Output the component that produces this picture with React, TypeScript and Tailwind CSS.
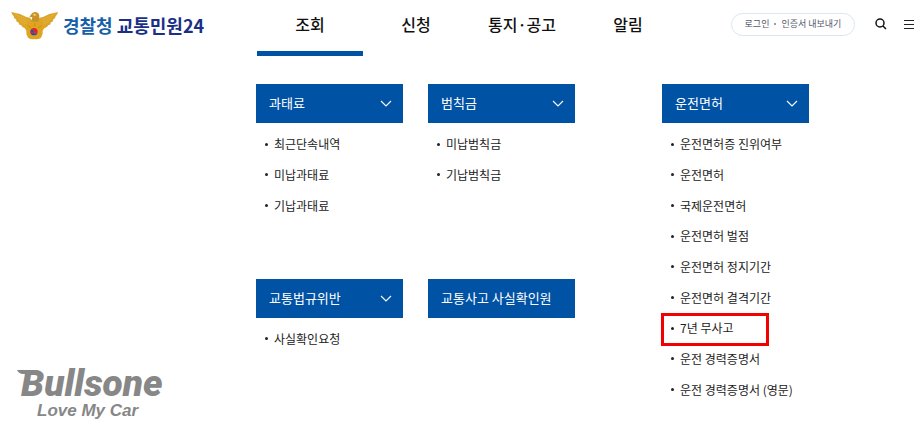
import { clsx } from 'clsx'

interface MenuItem {
  label: string
  highlighted?: boolean
}

interface MenuSection {
  title: string
  expandable: boolean
  items: MenuItem[]
  className?: string
  listClassName?: string
}

const navItems = ['조회', '신청', '통지·공고', '알림']

const sections: MenuSection[] = [
  {
    title: '과태료',
    expandable: true,
    items: [{ label: '최근단속내역' }, { label: '미납과태료' }, { label: '기납과태료' }],
    className: 'col-start-1 row-start-1',
    listClassName: 'min-h-[92px]',
  },
  {
    title: '범칙금',
    expandable: true,
    items: [{ label: '미납범칙금' }, { label: '기납범칙금' }],
    className: 'col-start-2 row-start-1',
    listClassName: 'min-h-[61px]',
  },
  {
    title: '운전면허',
    expandable: true,
    items: [
      { label: '운전면허증 진위여부' },
      { label: '운전면허' },
      { label: '국제운전면허' },
      { label: '운전면허 벌점' },
      { label: '운전면허 정지기간' },
      { label: '운전면허 결격기간' },
      { label: '7년 무사고', highlighted: true },
      { label: '운전 경력증명서' },
      { label: '운전 경력증명서 (영문)' },
    ],
    className: 'col-start-4 row-start-1 row-span-2',
    listClassName: 'min-h-[276px]',
  },
  {
    title: '교통법규위반',
    expandable: true,
    items: [{ label: '사실확인요청' }],
    className: 'col-start-1 row-start-2',
    listClassName: 'min-h-[29px]',
  },
  {
    title: '교통사고 사실확인원',
    expandable: false,
    items: [],
    className: 'col-start-2 row-start-2',
  },
]

function PoliceEmblem() {
  return (
    <svg viewBox="18 12 141 87" className="h-[29px] w-[47px] shrink-0" aria-hidden="true">
      {/* wings */}
      <path
        d="M19 15 L45 21 L64 30 L75 32 L80 40 L98 40 L103 32 L114 30 L133 21 L159 15 L156 23 L152 27 L150 34 L145 37 L143 44 L138 46 L135 53 L130 54 L126 60 L112 66 L66 66 L52 60 L48 54 L43 53 L40 46 L35 44 L33 37 L28 34 L26 27 L22 23 Z"
        fill="#dda62a"
      />
      <path
        d="M30 23 L66 38 M38 33 L66 45 M46 43 L66 52 M148 23 L112 38 M140 33 L112 45 M132 43 L112 52"
        stroke="#e3b03a"
        strokeWidth="3"
        fill="none"
      />
      {/* head */}
      <path d="M77 24 Q82 14 92 15 Q102 17 103 27 L101 44 L78 44 L82 30 L73 31 Z" fill="#c8922a" />
      <path d="M83 21 L91 20 L95 25 L87 27 Z" fill="#efca62" />
      {/* rose of sharon body */}
      <path
        d="M58 56 Q66 45 78 49 Q89 42 100 49 Q112 45 119 56 Q120 64 113 71 Q115 82 108 92 Q98 99 89 96 Q79 99 69 92 Q62 82 64 71 Q57 64 58 56 Z"
        fill="#dfa51f"
      />
      <path d="M68 56 L79 63 M109 56 L99 63 M89 49 L89 58" stroke="#bb8420" strokeWidth="2" />
      {/* taegeuk */}
      <path d="M76 74 A11 11 0 0 1 98 74 A5.5 5.5 0 0 1 87 74 A5.5 5.5 0 0 0 76 74" fill="#e0252f" />
      <path d="M76 74 A5.5 5.5 0 0 1 87 74 A5.5 5.5 0 0 0 98 74 A11 11 0 0 1 76 74" fill="#1c52a8" transform="rotate(0 87 74)" />
      <path d="M76 74 A5.5 5.5 0 0 0 87 74 Z" fill="#e0252f" />
    </svg>
  )
}

function Header() {
  return (
    <header className="flex items-start">
      <a href="#" className="flex h-[50px] w-[257px] shrink-0 items-center gap-[5px] pl-[11px]">
        <PoliceEmblem />
        <span className="flex gap-1 text-[18px] leading-6 font-bold whitespace-nowrap">
          <span className="text-[#1560a8]">경찰청</span>
          <span className="text-[#1b2f86]">교통민원24</span>
        </span>
      </a>

      <nav className="flex">
        {navItems.map((item, i) => (
          <a
            key={item}
            href="#"
            className={clsx(
              'flex h-14 w-[106px] items-center justify-center border-b-5 pb-1 text-base font-medium text-[#111]',
              i === 0 ? 'border-[#0052a5]' : 'border-transparent'
            )}
          >
            {item}
          </a>
        ))}
      </nav>

      <div className="ml-auto flex h-12 shrink-0 items-center pr-2">
        <div className="flex h-[23px] w-[124px] items-center justify-center rounded-full border border-[#dde4f2] text-[9px] whitespace-nowrap text-[#555b6b]">
          <a href="#">로그인</a>
          <span className="mx-[5px] size-[2px] rounded-full bg-[#777d8c]" />
          <a href="#">인증서 내보내기</a>
        </div>
        <button type="button" aria-label="검색" className="ml-5">
          <svg viewBox="0 0 12 12" className="size-3" fill="none" stroke="#111" strokeWidth="1.5">
            <circle cx="5" cy="5" r="4" />
            <path d="M8 8 L11 11" />
          </svg>
        </button>
        <button type="button" aria-label="전체메뉴" className="ml-4">
          <svg viewBox="0 0 12 12" className="size-3" fill="none" stroke="#222" strokeWidth="1.2">
            <path d="M1 2.5 H11 M1 6.5 H11 M1 10.5 H11" />
          </svg>
        </button>
      </div>
    </header>
  )
}

function Section({ section }: { section: MenuSection }) {
  return (
    <section className={section.className}>
      <button
        type="button"
        className="flex h-[39px] w-full items-center justify-between bg-[#0052a5] pr-[11px] pb-[2px] pl-[13px] text-left text-[13px] whitespace-nowrap text-white"
      >
        {section.title}
        {section.expandable && (
          <svg viewBox="0 0 12 7" className="mt-[2px] h-[7px] w-3" fill="none" stroke="#fff" strokeWidth="1.1">
            <path d="M1 1 L6 6 L11 1" />
          </svg>
        )}
      </button>

      {section.items.length > 0 && (
        <ul className={clsx('mt-[6px] grid auto-rows-fr', section.listClassName)}>
          {section.items.map(item => (
            <li key={item.label} className="relative flex items-center gap-[6px] pl-[9px]">
              <span className="size-[3px] rounded-full bg-[#222]" />
              <a href="#" className="text-xs whitespace-nowrap text-[#222]">
                {item.label}
              </a>
              {item.highlighted && (
                <span className="pointer-events-none absolute top-0 -bottom-[2px] -left-px w-[108px] border-3 border-[#f30000]" />
              )}
            </li>
          ))}
        </ul>
      )}
    </section>
  )
}

function SponsorMark() {
  return (
    <div className="relative pl-[21px] font-['Roboto',sans-serif] text-[#878787]">
      <svg viewBox="0 0 14 8" className="absolute top-[2px] left-[17px] h-2 w-[14px]" fill="currentColor" aria-hidden="true">
        <path d="M0 0 H14 V4 H6 Q2 4 0 0 Z" />
      </svg>
      <p className="text-[37px] leading-8 font-black italic">Bullsone</p>
      <p className="pt-px pl-4 font-['Liberation_Sans',sans-serif] text-[17px] leading-5 font-bold italic">
        Love My Car
      </p>
    </div>
  )
}

export default function App() {
  return (
    <div className="min-h-screen bg-white font-['Noto_Sans_CJK_KR',sans-serif]">
      <Header />
      <main className="flex pt-7 pb-[5px]">
        <aside className="flex w-64 shrink-0 flex-col justify-end">
          <SponsorMark />
        </aside>
        <div className="mr-[114px] mb-4 grid grow grid-cols-[147fr_147fr_37fr_147fr] grid-rows-[auto_1fr] gap-x-[25px] gap-y-[58px]">
          {sections.map(section => (
            <Section key={section.title} section={section} />
          ))}
        </div>
      </main>
    </div>
  )
}
